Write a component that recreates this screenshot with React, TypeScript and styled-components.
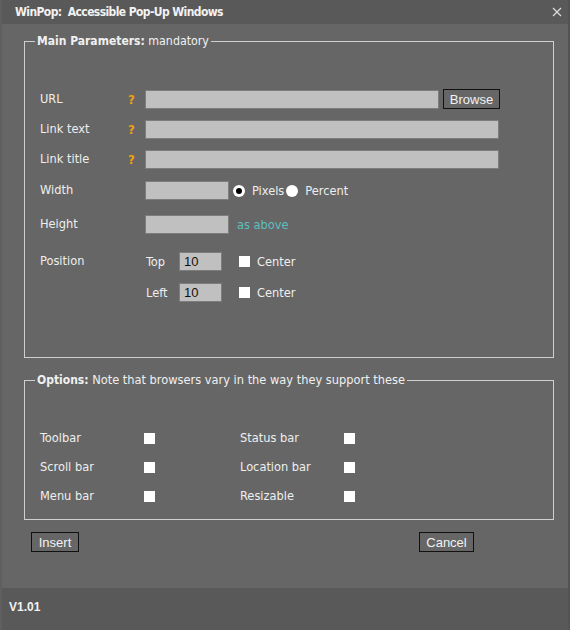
import React from "react";
import styled, { createGlobalStyle } from "styled-components";

const Global = createGlobalStyle`
  html, body { margin: 0; padding: 0; background: #595959; }
  * { box-sizing: border-box; }
`;

const FONT = `"DejaVu Sans Condensed", "DejaVu Sans", Tahoma, sans-serif`;
const ARIAL = `"Liberation Sans", Arial, sans-serif`;

const Window = styled.div`
  width: 570px;
  height: 630px;
  display: flex;
  flex-direction: column;
  background: #595959;
  border-left: 2px solid #5f5f5f;
  border-right: 2px solid #545454;
  font-family: ${FONT};
  font-size: 12.7px;
  color: #eeeeee;
`;

const TitleBar = styled.div`
  height: 24px;
  display: flex;
  align-items: center;
  justify-content: space-between;
  padding: 0 6px 0 13px;
  background: #595959;
  font-size: 12px;
  font-weight: bold;
  letter-spacing: -0.6px;
  color: #f2f2f2;
`;

const CloseBtn = styled.svg`
  width: 10px;
  height: 10px;
`;

const Body = styled.div`
  flex: 1;
  background: #666666;
  padding: 10px 14px 0 22px;
  display: flex;
  flex-direction: column;
`;

const Fieldset = styled.fieldset<{ $h: number; $mt: number }>`
  margin: ${(p) => p.$mt}px 0 0 0;
  padding: 0;
  border: 1px solid #cfcfcf;
  width: 530px;
  height: ${(p) => p.$h}px;
  min-width: 0;
`;

const Legend = styled.legend`
  margin-left: 10px;
  padding: 0 2px;
  font-size: 12.3px;
  line-height: 15px;
  color: #f0f0f0;
  b { font-weight: bold; font-size: 12px; }
`;

const Note = styled.span`
  font-size: 12.7px;
`;

const MainGrid = styled.div`
  padding: 40px 0 0 15px;
  display: flex;
  flex-direction: column;
`;

const Row = styled.div<{ $mt?: number; $top?: boolean }>`
  display: grid;
  grid-template-columns: 88px 17px 1fr;
  align-items: ${(p) => (p.$top ? "start" : "center")};
  min-height: 19px;
  margin-top: ${(p) => p.$mt ?? 0}px;
`;

const Label = styled.span`
  color: #eeeeee;
  line-height: 18px;
  padding-bottom: 1px;
`;

const Help = styled.span`
  color: #f0a010;
  font-weight: bold;
  font-size: 13px;
`;

const Controls = styled.div`
  display: flex;
  align-items: center;
`;

const TextBox = styled.div<{ $w: number }>`
  width: ${(p) => p.$w}px;
  height: 19px;
  background: #c0c0c0;
  border: 1px solid #7d7d7d;
  color: #111;
  font-family: ${ARIAL};
  font-size: 13px;
  line-height: 17px;
  padding-left: 4px;
`;

const Button = styled.button<{ $w: number }>`
  width: ${(p) => p.$w}px;
  height: 20px;
  background: #666666;
  border: 1px solid #111111;
  color: #f2f2f2;
  font-family: ${ARIAL};
  font-size: 13px;
  padding: 0;
  margin: 0;
`;

const Radio = styled.span<{ $on?: boolean }>`
  width: 12px;
  height: 12px;
  border-radius: 50%;
  background: #ffffff;
  display: inline-flex;
  align-items: center;
  justify-content: center;
  &::after {
    content: "";
    width: 6px;
    height: 6px;
    border-radius: 50%;
    background: ${(p) => (p.$on ? "#000" : "transparent")};
  }
`;

const Box = styled.span`
  width: 11px;
  height: 11px;
  background: #ffffff;
  display: inline-block;
`;

const Hint = styled.span`
  color: #5fbfbf;
`;

const Sub = styled.div`
  display: flex;
  flex-direction: column;
`;

const PosLine = styled.div<{ $mt?: number }>`
  display: grid;
  grid-template-columns: 33px 43px 17px 11px 7px auto;
  align-items: center;
  height: 19px;
  margin-top: ${(p) => p.$mt ?? 0}px;
  margin-left: 1px;
`;

const OptGrid = styled.div`
  padding: 36px 0 0 15px;
  display: grid;
  grid-template-columns: 104px 96px 104px 11px;
  grid-auto-rows: 29px;
  align-items: center;
`;

const Buttons = styled.div`
  display: flex;
  justify-content: space-between;
  padding: 12px 80px 0 7px;
`;

const Footer = styled.div`
  height: 42px;
  display: flex;
  align-items: center;
  padding: 0 0 5px 7px;
  background: #595959;
  font-family: ${ARIAL};
  font-weight: bold;
  font-size: 12px;
  color: #f2f2f2;
`;

export default function App() {
  return (
    <>
      <Global />
      <Window>
        <TitleBar>
          <span>WinPop:&nbsp; Accessible Pop-Up Windows</span>
          <CloseBtn viewBox="0 0 10 10">
            <path d="M1 1L9 9M9 1L1 9" stroke="#dddddd" strokeWidth="1.2" />
          </CloseBtn>
        </TitleBar>
        <Body>
          <Fieldset $h={324} $mt={0}>
            <Legend>
              <b>Main Parameters:</b> mandatory
            </Legend>
            <MainGrid>
              <Row>
                <Label>URL</Label>
                <Help>?</Help>
                <Controls>
                  <TextBox $w={294} />
                  <Button $w={57} style={{ marginLeft: 4 }}>
                    Browse
                  </Button>
                </Controls>
              </Row>
              <Row $mt={11}>
                <Label>Link text</Label>
                <Help>?</Help>
                <TextBox $w={354} />
              </Row>
              <Row $mt={11}>
                <Label>Link title</Label>
                <Help>?</Help>
                <TextBox $w={354} />
              </Row>
              <Row $mt={12}>
                <Label>Width</Label>
                <span />
                <Controls>
                  <TextBox $w={84} />
                  <Radio $on style={{ marginLeft: 4 }} />
                  <span style={{ marginLeft: 7 }}>Pixels</span>
                  <Radio style={{ marginLeft: 2 }} />
                  <span style={{ marginLeft: 7 }}>Percent</span>
                </Controls>
              </Row>
              <Row $mt={15}>
                <Label>Height</Label>
                <span />
                <Controls>
                  <TextBox $w={84} />
                  <Hint style={{ marginLeft: 8 }}>as above</Hint>
                </Controls>
              </Row>
              <Row $mt={18} $top>
                <Label>Position</Label>
                <span />
                <Sub>
                  <PosLine>
                    <span>Top</span>
                    <TextBox $w={43}>10</TextBox>
                    <span />
                    <Box />
                    <span />
                    <span>Center</span>
                  </PosLine>
                  <PosLine $mt={12}>
                    <span>Left</span>
                    <TextBox $w={43}>10</TextBox>
                    <span />
                    <Box />
                    <span />
                    <span>Center</span>
                  </PosLine>
                </Sub>
              </Row>
            </MainGrid>
          </Fieldset>
          <Fieldset $h={148} $mt={14}>
            <Legend>
              <b>Options:</b> <Note>Note that browsers vary in the way they support these</Note>
            </Legend>
            <OptGrid>
              <Label>Toolbar</Label>
              <Box />
              <Label>Status bar</Label>
              <Box />
              <Label>Scroll bar</Label>
              <Box />
              <Label>Location bar</Label>
              <Box />
              <Label>Menu bar</Label>
              <Box />
              <Label>Resizable</Label>
              <Box />
            </OptGrid>
          </Fieldset>
          <Buttons>
            <Button $w={48}>Insert</Button>
            <Button $w={55}>Cancel</Button>
          </Buttons>
        </Body>
        <Footer>V1.01</Footer>
      </Window>
    </>
  );
}
